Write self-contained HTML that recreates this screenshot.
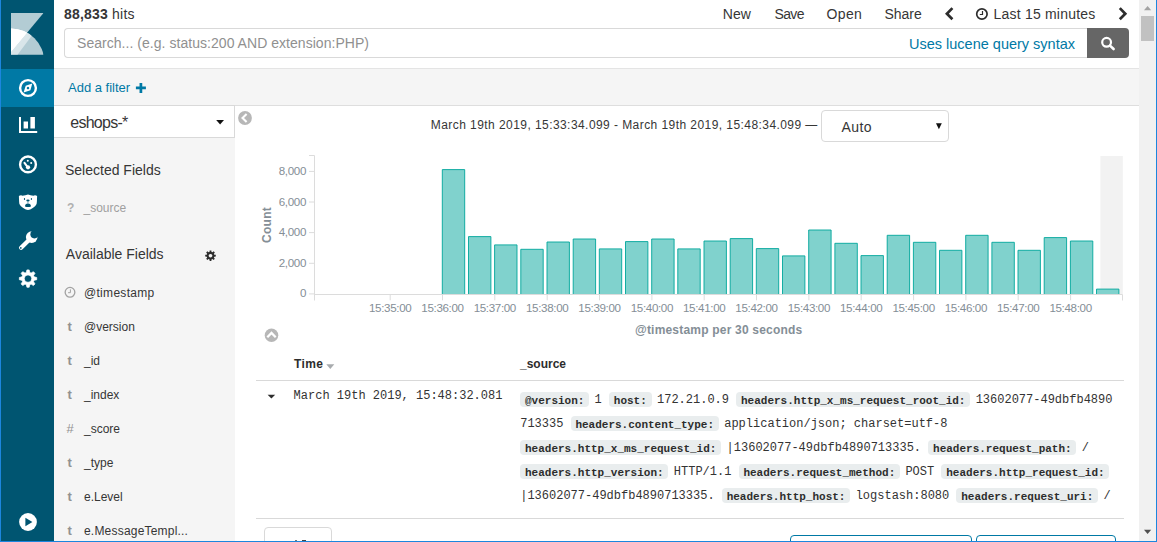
<!DOCTYPE html>
<html lang="en">
<head>
<meta charset="utf-8">
<title>Discover - Kibana</title>
<style>
*{box-sizing:border-box;margin:0;padding:0}
html,body{width:1157px;height:542px;overflow:hidden;background:#fff}
body{position:relative;font-family:"Liberation Sans",sans-serif;color:#363636;font-size:14px}
.abs{position:absolute}
.t{position:absolute;white-space:nowrap;line-height:1}
/* window frame */
#frameL{left:0;top:0;width:1px;height:542px;background:#1c86de}
#frameR{left:1156px;top:0;width:1px;height:542px;background:#1c86de}
#frameB{left:0;top:541px;width:1157px;height:1px;background:#1c86de}
/* nav */
#nav{left:1px;top:0;width:53px;height:541px;background:#005571}
#navActive{left:1px;top:69px;width:53px;height:38px;background:#0079a5}
/* scrollbar */
#sb{left:1139px;top:0;width:17px;height:541px;background:#f1f1f1}
#sbThumb{left:1141px;top:16px;width:13px;height:25px;background:#c1c1c1}
/* top */
#qinput{left:64px;top:28px;width:1024px;height:30px;border:1px solid #d9d9d9;border-right:none;border-radius:4px 0 0 4px;background:#fff}
#qbtn{left:1087px;top:28px;width:42px;height:30px;background:#666;border-radius:0 4px 4px 0}
#fbar{left:54px;top:68px;width:1085px;height:38px;background:#f5f5f5;border-top:1px solid #e4e4e4;border-bottom:1px solid #dedede}
/* field sidebar */
#fside{left:54px;top:106px;width:181px;height:435px;background:#f5f5f5}
#ipsel{left:54px;top:105px;width:181px;height:33px;background:#fff;border:1px solid #d9d9d9;border-left:none}
.fld{font-size:12px;color:#363636}
.fic{font-size:13px;font-weight:bold;color:#929292}
/* chart */
.ax{font-size:11.6px;letter-spacing:-0.35px;color:#848e96}
/* table */
.mono{font-family:"Liberation Mono",monospace;font-size:12px;color:#333}
.ln{position:absolute;left:520.2px;height:24px;line-height:24px;white-space:nowrap;font-family:"Liberation Mono",monospace;font-size:12px;color:#333}
.ln b{font-size:11px;letter-spacing:0;font-weight:bold;color:#2d2d2d;background:#e9edee;padding:2.6px 4.8px 1.4px;margin-right:5.4px;border-radius:4px}
</style>
</head>
<body>
<!-- global nav -->
<div class="abs" id="nav"></div>
<div class="abs" id="navActive"></div>


<svg class="abs" style="left:0;top:0" width="54" height="542" viewBox="0 0 54 542">
 <!-- logo -->
 <defs><clipPath id="lg"><rect x="11" y="13" width="32.5" height="41.7"/></clipPath>
 <clipPath id="arc"><circle cx="11" cy="61.75" r="33.25"/></clipPath></defs>
 <g clip-path="url(#lg)">
  <polygon points="11,13 43.5,13 11,51.9" fill="#b3ccd4"/>
  <g clip-path="url(#arc)">
   <rect x="11" y="13" width="33" height="42" fill="#b3ccd4"/>
   <polygon points="11,13 43.5,13 11,51.9" fill="#ffffff"/>
   <polygon points="43.5,13 11,51.9 11,54.7 17.5,54.7 48.9,13" fill="#d9e6ea"/>
   <polygon points="43.5,13 11,51.9 11,13" fill="#ffffff"/>
  </g>
 </g>
 <!-- discover -->
 <circle cx="28" cy="88" r="7.9" fill="none" stroke="#fff" stroke-width="2.4"/>
 <path d="M32.3,83.5 L30.4,90.3 L23.6,92.6 L25.7,85.8Z M28,86.8a1.25,1.25 0 1 0 0.01,0Z" fill="#fff" fill-rule="evenodd"/>
 <!-- visualize -->
 <path d="M19,117h2v14h16.2v2H19Z M23.6,121.6h4.4v7h-4.4Z M30.4,117h4.5v11.6h-4.5Z" fill="#fff"/>
 <!-- dashboard -->
 <circle cx="28" cy="164.4" r="7.9" fill="none" stroke="#fff" stroke-width="2.4"/>
 <path d="M24.5,162.9 L27.5,167" stroke="#fff" stroke-width="2.1" stroke-linecap="round"/>
 <circle cx="28" cy="167.3" r="2.1" fill="#fff"/>
 <circle cx="27.8" cy="160.7" r="1" fill="#fff"/>
 <circle cx="31.2" cy="163.1" r="1" fill="#fff"/>
 <!-- timelion bear -->
 <path d="M18.9,196.1 Q20.6,194.8 22.6,195.7 Q25.5,195.3 28,194.6 Q30.5,195.3 33.4,195.7 Q35.4,194.8 37.1,196.1 L37,199.2 Q36.9,202.6 36.6,204 Q35.8,206.2 32.8,207.9 Q30,209.9 28,209.9 Q26,209.9 23.2,207.9 Q20.2,206.2 19.4,204 Q19.1,202.6 19,199.2Z" fill="#fff"/>
 <path d="M25,206.5 Q25,203.5 27.96,203.5 Q30.95,203.5 30.95,206.5 Q27.96,207.7 25,206.5Z" fill="#005571"/>
 <ellipse cx="27.96" cy="200.6" rx="1.65" ry="1" fill="#005571"/>
 <path d="M27.96,201.4V203.4" stroke="#005571" stroke-width="0.55"/>
 <ellipse cx="24.5" cy="199.1" rx="0.6" ry="1" fill="#005571"/>
 <ellipse cx="31.4" cy="199.1" rx="0.6" ry="1" fill="#005571"/>
 <!-- wrench -->
 <circle cx="31.7" cy="237.1" r="5.8" fill="#fff"/>
 <circle cx="34.45" cy="234.35" r="4.05" fill="#005571"/>
 <path d="M29,239.9 L21.1,247.8" stroke="#fff" stroke-width="4.2" stroke-linecap="round"/>
 <circle cx="20.8" cy="247.9" r="0.85" fill="#005571"/>
 <!-- gear -->
 <path d="M26.31,272.55 L26.92,269.92 L29.18,269.92 L29.79,272.55 L31.10,273.09 L33.38,271.66 L34.99,273.27 L33.56,275.55 L34.10,276.86 L36.73,277.47 L36.73,279.73 L34.10,280.34 L33.56,281.65 L34.99,283.93 L33.38,285.54 L31.10,284.11 L29.79,284.65 L29.18,287.28 L26.92,287.28 L26.31,284.65 L25.00,284.11 L22.72,285.54 L21.11,283.93 L22.54,281.65 L22.00,280.34 L19.37,279.73 L19.37,277.47 L22.00,276.86 L22.54,275.55 L21.11,273.27 L22.72,271.66 L25.00,273.09Z M28,274.9a3.7,3.7 0 1 0 0.01,0Z" fill="#fff" fill-rule="evenodd" stroke="#fff" stroke-width="0.7" stroke-linejoin="round"/>
 <!-- play (collapse) -->
 <circle cx="28" cy="522" r="8.9" fill="#fff"/>
 <path d="M25.4,517.8 L32.4,522 L25.4,526.3Z" fill="#005571"/>
</svg>

<!-- top bar -->
<div class="abs" id="qinput"></div>
<div class="abs" id="qbtn"></div>
<div class="abs" id="fbar"></div>


<!-- top bar text -->
<div class="t" id="hits" style="left:64px;top:5.6px;font-size:14px;line-height:16px;letter-spacing:0.2px"><b>88,833</b> hits</div>
<div class="t" id="mNew" style="left:722.8px;top:6px;font-size:14px;line-height:16px">New</div>
<div class="t" id="mSave" style="left:774.4px;top:6px;font-size:14px;line-height:16px;letter-spacing:-0.6px">Save</div>
<div class="t" id="mOpen" style="left:826.5px;top:6px;font-size:14px;line-height:16px;letter-spacing:0.35px">Open</div>
<div class="t" id="mShare" style="left:884.4px;top:6px;font-size:14px;line-height:16px">Share</div>
<div class="t" id="mLast" style="left:993.6px;top:6px;font-size:14px;line-height:16px;letter-spacing:0.2px">Last 15 minutes</div>
<svg class="abs" style="left:940px;top:4px" width="192" height="20" viewBox="940 4 192 20">
 <path d="M952.4,8.1 L946.9,13.7 L952.4,19.3" fill="none" stroke="#2d2d2d" stroke-width="2.7"/>
 <path d="M1119.8,8.1 L1125.3,13.7 L1119.8,19.3" fill="none" stroke="#2d2d2d" stroke-width="2.7"/>
 <circle cx="981.9" cy="14" r="5.2" fill="none" stroke="#2d2d2d" stroke-width="1.7"/>
 <path d="M982.5,10.9 v3.6 h-2.7" fill="none" stroke="#2d2d2d" stroke-width="1.2"/>
</svg>
<div class="t" id="ph" style="left:77px;top:35px;font-size:14px;line-height:16px;color:#909090;letter-spacing:0.04px">Search... (e.g. status:200 AND extension:PHP)</div>
<div class="t" id="lucene" style="left:909px;top:35.5px;font-size:14.5px;line-height:17px;color:#0079a5">Uses lucene query syntax</div>
<svg class="abs" style="left:1098px;top:33px" width="20" height="20" viewBox="0 0 20 20">
 <circle cx="8.6" cy="9.3" r="4.4" fill="none" stroke="#fff" stroke-width="2.2"/>
 <path d="M12,12.6 L15.6,16" stroke="#fff" stroke-width="2.6" stroke-linecap="round"/>
</svg>
<div class="t" id="addf" style="left:68px;top:80px;font-size:13px;line-height:15px;color:#0079a5">Add a filter</div>
<svg class="abs" style="left:135px;top:82px" width="12" height="12" viewBox="0 0 12 12"><path d="M0.9,5.9h10M5.9,0.9v10" stroke="#0079a5" stroke-width="2.7"/></svg>

<!-- field sidebar -->
<div class="abs" id="fside"></div>
<div class="abs" id="ipsel"></div>


<!-- field sidebar text -->
<div class="t" id="ipname" style="left:70.3px;top:114px;font-size:16px;line-height:18px;letter-spacing:-0.75px">eshops-*</div>
<svg class="abs" style="left:215px;top:119px" width="10" height="7" viewBox="0 0 10 7"><path d="M1.2,1h7.8L5.1,5.4Z" fill="#111"/></svg>
<svg class="abs" style="left:238px;top:111.2px" width="14" height="14" viewBox="0 0 14 14"><circle cx="7" cy="7" r="6.9" fill="#b7b7b7"/><path d="M8.6,2.9 L4.5,7 L8.6,11.1" fill="none" stroke="#fff" stroke-width="2.1"/></svg>
<div class="t" id="selF" style="left:65px;top:161.3px;font-size:14px;line-height:18px">Selected Fields</div>
<div class="t fic" id="srcq" style="left:67px;top:201px;line-height:14px;color:#b0b0b0;font-size:12px">?</div>
<div class="t fld" id="srcn" style="left:83.5px;top:201px;line-height:14px;color:#a0a0a0">_source</div>
<div class="t" id="avF" style="left:65.8px;top:245.3px;font-size:14px;line-height:18px">Available Fields</div>
<svg class="abs" style="left:204.1px;top:249.3px" width="13.4" height="13.4" viewBox="204 249 14 14"><path d="M209.75,252.04 L209.91,250.47 L211.69,250.47 L211.85,252.04 L212.86,252.45 L214.08,251.46 L215.34,252.72 L214.35,253.94 L214.76,254.95 L216.33,255.11 L216.33,256.89 L214.76,257.05 L214.35,258.06 L215.34,259.28 L214.08,260.54 L212.86,259.55 L211.85,259.96 L211.69,261.53 L209.91,261.53 L209.75,259.96 L208.74,259.55 L207.52,260.54 L206.26,259.28 L207.25,258.06 L206.84,257.05 L205.27,256.89 L205.27,255.11 L206.84,254.95 L207.25,253.94 L206.26,252.72 L207.52,251.46 L208.74,252.45Z M210.8,254.1a1.9,1.9 0 1 0 0.01,0Z" fill="#2d2d2d" fill-rule="evenodd"/></svg>
<svg class="abs" style="left:64px;top:286px" width="12" height="12" viewBox="0 0 12 12"><circle cx="6" cy="6.3" r="4.85" fill="none" stroke="#a2a2a2" stroke-width="1.3"/><path d="M6.4,3.4v3.3h-2.3" fill="none" stroke="#a2a2a2" stroke-width="1"/></svg>
<div class="t fld" id="f0" style="left:84px;top:286px;line-height:14px;letter-spacing:0.3px">@timestamp</div>
<div class="t fic" style="left:67.5px;top:320px;line-height:14px">t</div><div class="t fld" id="f1" style="left:84px;top:320px;line-height:14px">@version</div>
<div class="t fic" style="left:67.5px;top:354px;line-height:14px">t</div><div class="t fld" id="f2" style="left:84px;top:354px;line-height:14px">_id</div>
<div class="t fic" style="left:67.5px;top:388px;line-height:14px">t</div><div class="t fld" id="f3" style="left:84px;top:388px;line-height:14px">_index</div>
<div class="t fic" style="left:66.5px;top:422px;line-height:14px;font-weight:normal">#</div><div class="t fld" id="f4" style="left:84px;top:422px;line-height:14px">_score</div>
<div class="t fic" style="left:67.5px;top:456px;line-height:14px">t</div><div class="t fld" id="f5" style="left:84px;top:456px;line-height:14px">_type</div>
<div class="t fic" style="left:67.5px;top:490px;line-height:14px">t</div><div class="t fld" id="f6" style="left:84px;top:490px;line-height:14px">e.Level</div>
<div class="t fic" style="left:67.5px;top:524px;line-height:14px">t</div><div class="t fld" id="f7" style="left:84px;top:524px;line-height:14px;letter-spacing:0.2px">e.MessageTempl...</div>


<!-- chart -->
<div class="t" id="range" style="left:430.8px;top:117.7px;font-size:12px;line-height:14px;letter-spacing:0.435px">March 19th 2019, 15:33:34.099 - March 19th 2019, 15:48:34.099 &#8212;</div>
<div class="abs" id="autosel" style="left:821px;top:110px;width:128px;height:32px;border:1px solid #d9d9d9;border-radius:4px;background:#fff"></div>
<div class="t" id="auto" style="left:841.6px;top:118.5px;font-size:14px;line-height:16px;letter-spacing:0.4px">Auto</div>
<svg class="abs" style="left:935px;top:122px" width="8" height="8" viewBox="0 0 8 8"><path d="M1,1.3h5.8L3.9,7.2Z" fill="#111"/></svg>
<svg class="abs" style="left:236px;top:150px" width="903" height="200" viewBox="236 150 903 200">
 <rect x="1100.4" y="156" width="22.4" height="138" fill="#f2f2f2"/>
 <g fill="#80d2cd" stroke="#00a69b" stroke-width="1" stroke-opacity="0.9">
 <path d="M442.3,294.2V169.6h22.4V294.2"/>
 <path d="M468.5,294.2V236.6h22.4V294.2"/>
 <path d="M494.6,294.2V244.9h22.4V294.2"/>
 <path d="M520.8,294.2V249.3h22.4V294.2"/>
 <path d="M547.0,294.2V242.0h22.4V294.2"/>
 <path d="M573.2,294.2V239.0h22.4V294.2"/>
 <path d="M599.3,294.2V248.9h22.4V294.2"/>
 <path d="M625.5,294.2V241.6h22.4V294.2"/>
 <path d="M651.7,294.2V239.0h22.4V294.2"/>
 <path d="M677.8,294.2V248.9h22.4V294.2"/>
 <path d="M704.0,294.2V241.0h22.4V294.2"/>
 <path d="M730.2,294.2V238.6h22.4V294.2"/>
 <path d="M756.3,294.2V248.6h22.4V294.2"/>
 <path d="M782.5,294.2V255.9h22.4V294.2"/>
 <path d="M808.7,294.2V230.0h22.4V294.2"/>
 <path d="M834.9,294.2V243.3h22.4V294.2"/>
 <path d="M861.0,294.2V255.6h22.4V294.2"/>
 <path d="M887.2,294.2V235.3h22.4V294.2"/>
 <path d="M913.4,294.2V242.3h22.4V294.2"/>
 <path d="M939.5,294.2V250.3h22.4V294.2"/>
 <path d="M965.7,294.2V235.3h22.4V294.2"/>
 <path d="M991.9,294.2V242.3h22.4V294.2"/>
 <path d="M1018.0,294.2V250.3h22.4V294.2"/>
 <path d="M1044.2,294.2V237.6h22.4V294.2"/>
 <path d="M1070.4,294.2V241.0h22.4V294.2"/>
 <path d="M1096.5,294.2V289.1h22.4V294.2"/>
 </g>
 <path d="M309,155.5h5.5V300.5 M314,294.5H1122.5v6 M390.2,294v6.3 M442.5,294v6.3 M494.8,294v6.3 M547.2,294v6.3 M599.5,294v6.3 M651.9,294v6.3 M704.2,294v6.3 M756.5,294v6.3 M808.9,294v6.3 M861.2,294v6.3 M913.6,294v6.3 M965.9,294v6.3 M1018.2,294v6.3 M1070.6,294v6.3 M309,293.9h5 M309,263.3h5 M309,232.6h5 M309,202.0h5 M309,171.4h5" fill="none" stroke="#dcdcdc" stroke-width="1"/>
 <circle cx="271.5" cy="335.3" r="6.8" fill="#b7b7b7"/><path d="M267.3,337.2 L271.5,333 L275.7,337.2" fill="none" stroke="#fff" stroke-width="2.3"/>
</svg>
<div class="t ax" style="left:360.2px;top:302px;width:60px;text-align:center;line-height:12px">15:35:00</div>
<div class="t ax" style="left:412.5px;top:302px;width:60px;text-align:center;line-height:12px">15:36:00</div>
<div class="t ax" style="left:464.8px;top:302px;width:60px;text-align:center;line-height:12px">15:37:00</div>
<div class="t ax" style="left:517.2px;top:302px;width:60px;text-align:center;line-height:12px">15:38:00</div>
<div class="t ax" style="left:569.5px;top:302px;width:60px;text-align:center;line-height:12px">15:39:00</div>
<div class="t ax" style="left:621.9px;top:302px;width:60px;text-align:center;line-height:12px">15:40:00</div>
<div class="t ax" style="left:674.2px;top:302px;width:60px;text-align:center;line-height:12px">15:41:00</div>
<div class="t ax" style="left:726.5px;top:302px;width:60px;text-align:center;line-height:12px">15:42:00</div>
<div class="t ax" style="left:778.9px;top:302px;width:60px;text-align:center;line-height:12px">15:43:00</div>
<div class="t ax" style="left:831.2px;top:302px;width:60px;text-align:center;line-height:12px">15:44:00</div>
<div class="t ax" style="left:883.6px;top:302px;width:60px;text-align:center;line-height:12px">15:45:00</div>
<div class="t ax" style="left:935.9px;top:302px;width:60px;text-align:center;line-height:12px">15:46:00</div>
<div class="t ax" style="left:988.2px;top:302px;width:60px;text-align:center;line-height:12px">15:47:00</div>
<div class="t ax" style="left:1040.6px;top:302px;width:60px;text-align:center;line-height:12px">15:48:00</div>
<div class="t ax" style="left:246px;top:287.4px;width:60px;text-align:right;line-height:12px">0</div>
<div class="t ax" style="left:246px;top:256.8px;width:60px;text-align:right;line-height:12px">2,000</div>
<div class="t ax" style="left:246px;top:226.1px;width:60px;text-align:right;line-height:12px">4,000</div>
<div class="t ax" style="left:246px;top:195.5px;width:60px;text-align:right;line-height:12px">6,000</div>
<div class="t ax" style="left:246px;top:164.9px;width:60px;text-align:right;line-height:12px">8,000</div>
<div class="t" id="count" style="left:237px;top:218.3px;width:60px;text-align:center;font-size:12px;font-weight:bold;color:#848e96;line-height:14px;letter-spacing:0.3px;transform:rotate(-90deg)">Count</div>
<div class="t" id="xtitle" style="left:635px;top:323px;font-size:12px;font-weight:bold;color:#848e96;line-height:14px;letter-spacing:0.2px">@timestamp per 30 seconds</div>


<!-- table -->
<div class="t" id="thTime" style="left:294.1px;top:357px;font-size:12px;font-weight:bold;line-height:14px;letter-spacing:0.35px;color:#2d2d2d">Time</div>
<svg class="abs" style="left:326.1px;top:363.5px" width="9" height="6" viewBox="0 0 9 6"><path d="M0.3,0.3h8L4.3,4.9Z" fill="#a8abae"/></svg>
<div class="t" id="thSrc" style="left:520px;top:357px;font-size:12px;font-weight:bold;line-height:14px;color:#2d2d2d">_source</div>
<div class="abs" style="left:256px;top:380px;width:868px;height:1px;background:#d9d9d9"></div>
<svg class="abs" style="left:267px;top:393.5px" width="9" height="6" viewBox="0 0 9 6"><path d="M0.6,0.7h7.6L4.4,4.6Z" fill="#2d2d2d"/></svg>
<div class="t mono" id="tcell" style="left:293.6px;top:389.2px;line-height:14px">March 19th 2019, 15:48:32.081</div>
<div class="ln" id="l1" style="top:388.1px"><b>@version:</b>1 <b>host:</b>172.21.0.9 <b>headers.http_x_ms_request_root_id:</b>13602077-49dbfb4890</div>
<div class="ln" id="l2" style="top:412.1px">713335 <b>headers.content_type:</b>application/json; charset=utf-8</div>
<div class="ln" id="l3" style="top:436.1px"><b>headers.http_x_ms_request_id:</b>|13602077-49dbfb4890713335. <b>headers.request_path:</b>/</div>
<div class="ln" id="l4" style="top:460.1px"><b>headers.http_version:</b>HTTP/1.1 <b>headers.request_method:</b>POST <b>headers.http_request_id:</b></div>
<div class="ln" id="l5" style="top:484.1px">|13602077-49dbfb4890713335. <b>headers.http_host:</b>logstash:8080 <b>headers.request_uri:</b>/</div>
<div class="abs" style="left:256px;top:518px;width:868px;height:1px;background:#d9d9d9"></div>
<div class="abs" style="left:264px;top:527px;width:68px;height:30px;border:1px solid #d9d9d9;border-radius:4px"></div>
<div class="abs" style="left:295px;top:540px;width:1.5px;height:1px;background:#777"></div><div class="abs" style="left:302.3px;top:540px;width:4px;height:1px;background:#444"></div>
<div class="abs" style="left:790px;top:535px;width:182px;height:30px;border:1px solid #0079a5;border-radius:4px"></div>
<div class="abs" style="left:976px;top:535px;width:140px;height:30px;border:1px solid #0079a5;border-radius:4px"></div>

<!-- scrollbar + frame -->
<div class="abs" id="sb"></div>
<div class="abs" id="sbThumb"></div>
<svg class="abs" style="left:1140px;top:0" width="16" height="541" viewBox="0 0 16 541"><path d="M4,10.3h7.2L7.6,6Z" fill="#a3a3a3"/><path d="M4,529.8h7.2L7.6,534.1Z" fill="#505050"/></svg>

<div class="abs" id="frameL"></div>
<div class="abs" id="frameR"></div>
<div class="abs" id="frameB"></div>
</body>
</html>
